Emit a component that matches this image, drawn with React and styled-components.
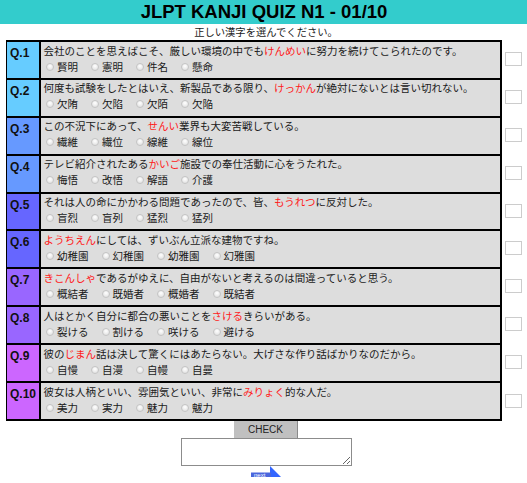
import React from "react";
import styled, { createGlobalStyle } from "styled-components";

const GlobalStyle = createGlobalStyle`
  body {
    margin: 0;
    background: #ffffff;
    font-family: "Noto Sans CJK JP", "Liberation Sans", sans-serif;
    color: #1a1a1a;
  }
`;

const Header = styled.div`
  height: 24px;
  background-color: #33cccc;
  display: flex;
  justify-content: center;
  align-items: center;
`;

const Title = styled.h1`
  margin: 0;
  padding-left: 1px;
  font-family: "Liberation Sans", Arial, sans-serif;
  font-size: 18.5px;
  font-weight: bold;
  line-height: 24px;
  color: #000;
`;

const Lead = styled.div`
  text-align: center;
  font-size: 10.3px;
  line-height: 16px;
  padding-left: 5px;
`;

const Quiz = styled.div`
  padding-left: 6px;
  display: flex;
  flex-direction: column;
`;

const Row = styled.div`
  display: flex;
  align-items: center;
  gap: 3px;
`;

const Cell = styled.div`
  width: 496px;
  box-sizing: border-box;
  display: grid;
  grid-template-columns: 34px 1fr;
  border-left: 1px solid #000;
  border-right: 2px solid #000;
  border-top: 2px solid #000;
  border-bottom: ${(p) => (p.last ? "2px solid #000" : "none")};
  background-color: #dddddd;
`;

const Label = styled.div`
  height: 35.9px;
  box-sizing: border-box;
  background-color: ${(p) => p.color};
  border-right: 2px solid #000;
  padding: 4px 0 0 3px;
  font-family: "Liberation Sans", Arial, sans-serif;
  font-size: 12px;
  font-weight: bold;
  line-height: 14px;
  color: #111;
`;

const Body = styled.div`
  padding-top: 0.5px;
  font-size: 10.5px;
  line-height: 16px;
  white-space: nowrap;
  overflow: hidden;
`;

const Sentence = styled.div`
  padding-left: 2.5px;
`;

const Hint = styled.span`
  color: #ff1a1a;
`;

const Options = styled.div`
  padding-left: 5px;
  display: flex;
`;

const Option = styled.label`
  display: inline-flex;
  align-items: center;
  margin-right: 13px;
`;

const Radio = styled.input`
  appearance: none;
  flex: none;
  margin: 0 3px 0 0;
  width: 8px;
  height: 8px;
  border-radius: 50%;
  border: 1px solid #c4c4c4;
  background: radial-gradient(circle at 50% 35%, #ffffff 0%, #e6e6e6 70%);
  box-sizing: border-box;
`;

const Mark = styled.div`
  width: 17px;
  height: 14px;
  box-sizing: border-box;
  border: 1px solid #cccccc;
  background: #fff;
`;

const Footer = styled.div`
  padding-left: 5px;
  display: flex;
  flex-direction: column;
  align-items: center;
`;

const CheckButton = styled.button`
  width: 64px;
  height: 17px;
  padding: 0;
  border: none;
  border-right: 1px solid #8a8a8a;
  background-color: #c0c0c0;
  font-family: "Liberation Sans", Arial, sans-serif;
  font-size: 10px;
  color: #222;
`;

const Answer = styled.textarea`
  display: block;
  width: 171px;
  height: 28px;
  box-sizing: border-box;
  border: 1px solid #8c8c8c;
  margin: 0;
  padding: 2px;
`;

const NextLink = styled.a`
  display: block;
  line-height: 0;
`;

const questions = [
  { pre: "会社のことを思えばこそ、厳しい環境の中でも", hint: "けんめい", post: "に努力を続けてこられたのです。", options: ["賢明", "憲明", "件名", "懸命"] },
  { pre: "何度も試験をしたとはいえ、新製品である限り、", hint: "けっかん", post: "が絶対にないとは言い切れない。", options: ["欠陏", "欠陷", "欠陌", "欠陥"] },
  { pre: "この不況下にあって、", hint: "せんい", post: "業界も大変苦戦している。", options: ["繊維", "繊位", "線維", "線位"] },
  { pre: "テレビ紹介されたある", hint: "かいご", post: "施設での奉仕活動に心をうたれた。", options: ["悔悟", "改悟", "解語", "介護"] },
  { pre: "それは人の命にかかわる問題であったので、皆、", hint: "もうれつ", post: "に反対した。", options: ["盲烈", "盲列", "猛烈", "猛列"] },
  { pre: "", hint: "ようちえん", post: "にしては、ずいぶん立派な建物ですね。", options: ["幼稚園", "幻稚園", "幼雅園", "幻雅園"] },
  { pre: "", hint: "きこんしゃ", post: "であるがゆえに、自由がないと考えるのは間違っていると思う。", options: ["概結者", "既婚者", "概婚者", "既結者"] },
  { pre: "人はとかく自分に都合の悪いことを", hint: "さける", post: "きらいがある。", options: ["裂ける", "割ける", "咲ける", "避ける"] },
  { pre: "彼の", hint: "じまん", post: "話は決して驚くにはあたらない。大げさな作り話ばかりなのだから。", options: ["自慢", "自漫", "自幔", "自曼"] },
  { pre: "彼女は人柄といい、雰囲気といい、非常に", hint: "みりょく", post: "的な人だ。", options: ["美力", "実力", "魅力", "魃力"] },
];

const labelColors = ["#66ccff", "#66ccff", "#6699ff", "#6699ff", "#6666ff", "#6666ff", "#9966ff", "#9966ff", "#cc66ff", "#cc66ff"];

function NextArrow() {
  return (
    <svg width="31" height="12" viewBox="0 0 31 12">
      <polygon points="19,0 19,11 30,11" fill="#3366ff" />
      <rect x="0" y="6.5" width="20" height="4.5" fill="#4a66dd" />
      <text x="3" y="10.6" fontSize="6" fontFamily="Liberation Sans, Arial, sans-serif" fill="#ffffff">next</text>
    </svg>
  );
}

function App() {
  return (
    <>
      <GlobalStyle />
      <Header>
        <Title>JLPT KANJI QUIZ N1 - 01/10</Title>
      </Header>
      <Lead>正しい漢字を選んでください。</Lead>
      <Quiz>
        {questions.map((q, i) => (
          <Row key={i}>
            <Cell last={i === questions.length - 1}>
              <Label color={labelColors[i]}>Q.{i + 1}</Label>
              <Body>
                <Sentence>
                  {q.pre}
                  <Hint>{q.hint}</Hint>
                  {q.post}
                </Sentence>
                <Options>
                  {q.options.map((o) => (
                    <Option key={o}>
                      <Radio type="radio" name={`q${i + 1}`} />
                      {o}
                    </Option>
                  ))}
                </Options>
              </Body>
            </Cell>
            <Mark />
          </Row>
        ))}
      </Quiz>
      <Footer>
        <CheckButton>CHECK</CheckButton>
        <Answer />
        <NextLink href="#">
          <NextArrow />
        </NextLink>
      </Footer>
    </>
  );
}

export default App;
